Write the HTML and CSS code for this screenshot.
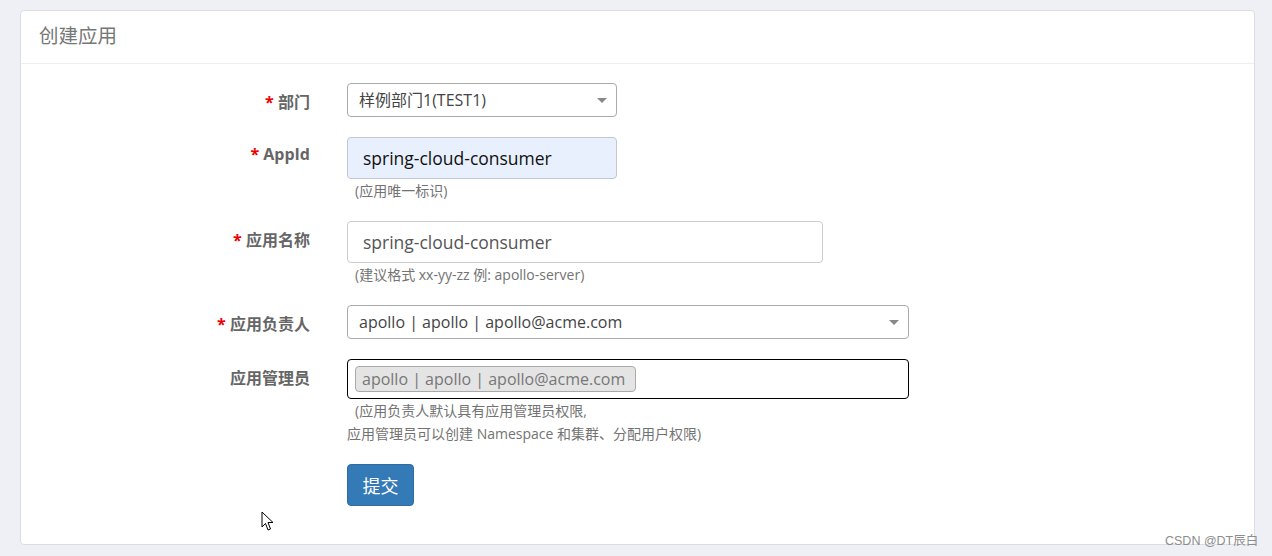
FILE: index.html
```html
<!DOCTYPE html>
<html lang="zh">
<head>
<meta charset="utf-8">
<title>创建应用</title>
<link rel="stylesheet" href="styles.css">
</head>
<body>
<div class="panel">
  <div class="panel-heading">创建应用</div>
  <form class="panel-body">
    <div class="row">
      <label class="label"><span class="req">*</span> 部门</label>
      <div class="control">
        <div class="select w270">样例部门1(TEST1)<span class="arrow"></span></div>
      </div>
    </div>
    <div class="row">
      <label class="label"><span class="req">*</span> AppId</label>
      <div class="control">
        <div class="input autofill w270">spring-cloud-consumer</div>
        <div class="help first">(应用唯一标识)</div>
      </div>
    </div>
    <div class="row">
      <label class="label"><span class="req">*</span> 应用名称</label>
      <div class="control">
        <div class="input name w476">spring-cloud-consumer</div>
        <div class="help first">(建议格式 xx-yy-zz 例: apollo-server)</div>
      </div>
    </div>
    <div class="row">
      <label class="label"><span class="req">*</span> 应用负责人</label>
      <div class="control">
        <div class="select w562">apollo | apollo | apollo@acme.com<span class="arrow"></span></div>
      </div>
    </div>
    <div class="row">
      <label class="label">应用管理员</label>
      <div class="control">
        <div class="multi w562"><span class="tag">apollo | apollo | apollo@acme.com</span></div>
        <div class="help first">(应用负责人默认具有应用管理员权限,</div>
        <div class="help second">应用管理员可以创建 Namespace 和集群、分配用户权限)</div>
      </div>
    </div>
    <div class="row btn-row">
      <div class="label"></div>
      <div class="control">
        <button type="button" class="btn">提交</button>
      </div>
    </div>
  </form>
</div>
<svg class="cursor" width="13" height="21" viewBox="0 0 13 21"><path d="M1 1 L1 16 L4.5 12.5 L7 19 L9.5 18 L7 11.5 L12 11.5 Z" fill="#fff" stroke="#000" stroke-width="1" stroke-linejoin="miter"/></svg>
<div class="watermark">CSDN @DT辰白</div>
</body>
</html>
```
FILE: styles.css
```css
html, body {
  margin: 0;
  padding: 0;
}
body {
  background: #eff0f6;
  font-family: "Open Sans", "Noto Sans CJK SC", sans-serif;
  color: #333;
  width: 1272px;
  height: 556px;
  overflow: hidden;
  position: relative;
}
.panel {
  position: absolute;
  left: 20px;
  top: 10px;
  width: 1233px;
  height: 533px;
  background: #fff;
  border: 1px solid #dcdde2;
  border-radius: 4px;
}
.panel-heading {
  height: 53px;
  box-sizing: border-box;
  padding: 9px 18px 0;
  font-size: 19.5px;
  color: #777;
  border-bottom: 1px solid #eceef2;
}
.panel-body {
  display: flex;
  flex-direction: column;
  padding-top: 19px;
}
.row {
  display: flex;
  margin-bottom: 20px;
}
.btn-row {
  margin-top: -1px;
}
.label {
  width: 289px;
  flex: none;
  text-align: right;
  font-weight: 700;
  font-size: 16px;
  color: #666;
  padding-top: 6px;
  box-sizing: border-box;
}
.req {
  color: #e00;
}
.control {
  margin-left: 37px;
  display: flex;
  flex-direction: column;
}
.w270 { width: 270px; }
.w476 { width: 476px; }
.w562 { width: 562px; }
.select {
  position: relative;
  height: 34px;
  box-sizing: border-box;
  border: 1px solid #aaa;
  border-radius: 4px;
  padding: 0 11px;
  line-height: 32px;
  font-size: 16px;
  color: #444;
}
.arrow {
  position: absolute;
  right: 9px;
  top: 14px;
  width: 0;
  height: 0;
  border-left: 5px solid transparent;
  border-right: 5px solid transparent;
  border-top: 5px solid #888;
}
.input {
  height: 42px;
  box-sizing: border-box;
  border: 1px solid #ccc;
  border-radius: 4px;
  padding: 0 15px;
  line-height: 40px;
  font-size: 17.5px;
  color: #555;
}
.autofill {
  background: #e8f0fe;
  border-color: #c3c8d0;
  color: #111;
}
.help {
  font-size: 14px;
  color: #737373;
  line-height: 22px;
}
.help.first {
  padding-left: 8px;
  padding-top: 1px;
  margin-bottom: -1px;
}
.help.second {
  margin-top: 2px;
}
.multi {
  height: 40px;
  box-sizing: border-box;
  border: 1px solid #000;
  border-radius: 4px;
  padding: 6px 7px;
}
.tag {
  display: inline-block;
  height: 26px;
  box-sizing: border-box;
  background: #e4e4e4;
  border: 1px solid #aaa;
  border-radius: 4px;
  padding: 0 10px 0 6px;
  line-height: 24px;
  font-size: 16px;
  color: #777;
}
.btn {
  width: 67px;
  height: 42px;
  background: #337ab7;
  border: 1px solid #2e6da4;
  border-radius: 4px;
  color: #fff;
  font-family: "Open Sans", "Noto Sans CJK SC", sans-serif;
  font-size: 18px;
  padding: 0;
}
.cursor {
  position: absolute;
  left: 261px;
  top: 511px;
}
.watermark {
  position: absolute;
  left: 1165px;
  top: 530px;
  font-family: "Liberation Sans", "Noto Sans CJK SC", sans-serif;
  font-size: 12.5px;
  color: #8c8c8c;
}
```
